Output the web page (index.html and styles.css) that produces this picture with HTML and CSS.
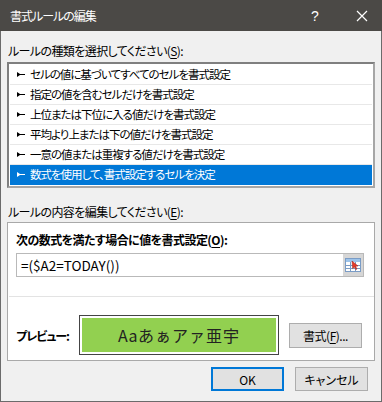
FILE: index.html
```html
<!DOCTYPE html>
<html lang="ja">
<head>
    <meta charset="UTF-8">
    <title>書式ルールの編集</title>
    <link rel="stylesheet" href="styles.css">
</head>
<body>
    <div class="dialog">
        <div class="titlebar">
            <span class="title">書式ルールの編集</span>
            <span class="help">?</span>
            <span class="close">
                <svg width="12" height="12" viewBox="0 0 12 12"><path d="M1 1L11 11M11 1L1 11" stroke="#fff" stroke-width="1.2"/></svg>
            </span>
        </div>

        <div class="body">
            <div class="label first">ルールの種類を選択してください(<u>S</u>):</div>
            <ul class="rule-list">
                <li><svg class="mark" width="8" height="5" viewBox="0 0 8 5"><path d="M0 0L3 2H8V3H3L0 5Z"/></svg>セルの値に基づいてすべてのセルを書式設定</li>
                <li><svg class="mark" width="8" height="5" viewBox="0 0 8 5"><path d="M0 0L3 2H8V3H3L0 5Z"/></svg>指定の値を含むセルだけを書式設定</li>
                <li><svg class="mark" width="8" height="5" viewBox="0 0 8 5"><path d="M0 0L3 2H8V3H3L0 5Z"/></svg>上位または下位に入る値だけを書式設定</li>
                <li><svg class="mark" width="8" height="5" viewBox="0 0 8 5"><path d="M0 0L3 2H8V3H3L0 5Z"/></svg>平均より上または下の値だけを書式設定</li>
                <li><svg class="mark" width="8" height="5" viewBox="0 0 8 5"><path d="M0 0L3 2H8V3H3L0 5Z"/></svg>一意の値または重複する値だけを書式設定</li>
                <li class="selected"><svg class="mark" width="8" height="5" viewBox="0 0 8 5"><path d="M0 0L3 2H8V3H3L0 5Z"/></svg>数式を使用して、書式設定するセルを決定</li>
            </ul>

            <div class="label second">ルールの内容を編集してください(<u>E</u>):</div>
            <div class="panel">
                <div class="panel-head">次の数式を満たす場合に値を書式設定(<u>O</u>):</div>
                <div class="formula">
                    <span class="formula-text">=($A2=TODAY())</span>
                    <span class="range-btn">
                        <svg width="16" height="14" viewBox="0 0 16 14">
                            <rect x="0.5" y="0.5" width="15" height="13" fill="#fff" stroke="#7a9cc6"/>
                            <rect x="1" y="1" width="14" height="3" fill="#9cc3ea"/>
                            <path d="M1 7.5H15M1 10.5H15M5.5 4V13M10.5 4V13" stroke="#7a9cc6" stroke-width="1"/>
                            <path d="M7 3L13 8L10.5 8.3L12 11L10.8 11.6L9.4 8.9L7.6 10.5Z" fill="#e53a2a" stroke="#a0261a" stroke-width="0.5"/>
                        </svg>
                    </span>
                </div>
                <div class="sep"></div>
                <div class="preview-row">
                    <span class="preview-label">プレビュー:</span>
                    <div class="preview-box">
                        <div class="preview-fill"><span class="latin">Aa</span>あぁアァ亜宇</div>
                    </div>
                    <button class="btn format-btn">書式(<u>F</u>)...</button>
                </div>
            </div>

            <div class="actions">
                <button class="btn ok">OK</button>
                <button class="btn">キャンセル</button>
            </div>
        </div>
    </div>
</body>
</html>
```

FILE: styles.css
```css
/* dialog */
* {
    box-sizing: border-box;
}

body {
    margin: 0;
    font-family: "Noto Sans CJK JP", "Noto Sans", sans-serif;
    font-size: 12px;
    font-feature-settings: "palt";
    color: #000;
}

u {
    text-decoration-thickness: 1px;
    text-underline-offset: 2px;
}

.dialog {
    width: 382px;
    height: 402px;
    background: #f0f0f0;
    border: 1px solid #6b6b6b;
    border-top: none;
    display: flex;
    flex-direction: column;
}

.titlebar {
    height: 31px;
    margin: 0 -1px;
    background: #4b4946;
    color: #fff;
    display: flex;
    align-items: center;
    padding-left: 10px;
}

.title {
    flex: 1;
    line-height: 16px;
    letter-spacing: -1px;
}

.help {
    width: 14px;
    font-family: "Liberation Sans", sans-serif;
    font-size: 14px;
    margin-right: 31px;
}

.close {
    width: 12px;
    height: 12px;
    margin-right: 14px;
    display: flex;
}

.body {
    flex: 1;
    padding: 12px 6px 0 6px;
    display: flex;
    flex-direction: column;
}

.label {
    line-height: 16px;
    padding-left: 1px;
    margin-bottom: 3px;
    letter-spacing: -0.6px;
}

.label.second {
    margin-bottom: 2px;
}

.rule-list {
    list-style: none;
    margin: 0 0 16px 0;
    padding: 1px;
    border: 2px solid #8a8a8a;
    border-color: #7f7f7f #a6a6a6 #a6a6a6 #7f7f7f;
    background: #fff;
}

.rule-list li {
    height: 20px;
    line-height: 19px;
    border-bottom: 1px solid #e8e8e8;
    display: flex;
    align-items: center;
    padding-left: 7px;
    font-size: 11.5px;
    letter-spacing: -1px;
}

.rule-list li.selected {
    background: #0078d7;
    color: #fff;
    border-bottom-color: #0078d7;
}

.mark {
    fill: currentColor;
    margin-right: 5px;
    flex: none;
}

.panel {
    background: #fff;
    border: 1px solid #a9a9a9;
    height: 139px;
    padding: 9px 9px 0 8px;
}

.panel-head {
    font-weight: bold;
    line-height: 16px;
    margin-bottom: 5px;
    letter-spacing: -0.55px;
}

.formula {
    width: 348px;
    height: 24px;
    border: 1px solid #b9b9b9;
    display: flex;
    align-items: center;
    padding-left: 4px;
}

.formula-text {
    flex: 1;
    font-size: 13.5px;
}

.range-btn {
    width: 20px;
    height: 22px;
    background: #d6d6d6;
    display: flex;
    align-items: center;
    justify-content: center;
}

.sep {
    height: 1px;
    background: #e3e3e3;
    margin: 19px 0 18px -7px;
    width: 365px;
}

.preview-row {
    display: flex;
    align-items: center;
}

.preview-label {
    font-weight: bold;
    width: 63px;
    letter-spacing: -1px;
}

.preview-box {
    width: 200px;
    height: 40px;
    border: 1px solid #444;
    padding: 2px;
    margin-right: 10px;
}

.preview-fill {
    height: 100%;
    background: #92d050;
    color: #222;
    font-size: 16px;
    font-feature-settings: normal;
    letter-spacing: 1px;
    display: flex;
    align-items: center;
    justify-content: center;
}

.preview-fill .latin {
    letter-spacing: 0.5px;
}

.btn {
    font-family: inherit;
    font-size: 12px;
    font-feature-settings: "palt";
    background: #e1e1e1;
    border: 1px solid #adadad;
    width: 73px;
    height: 24px;
    padding: 0;
    color: #000;
}

.format-btn {
    height: 25px;
    letter-spacing: -0.5px;
}

.actions {
    display: flex;
    justify-content: flex-end;
    gap: 11px;
    padding-top: 6px;
    padding-right: 7px;
}

.btn.ok {
    border: 2px solid #0078d7;
}
```
